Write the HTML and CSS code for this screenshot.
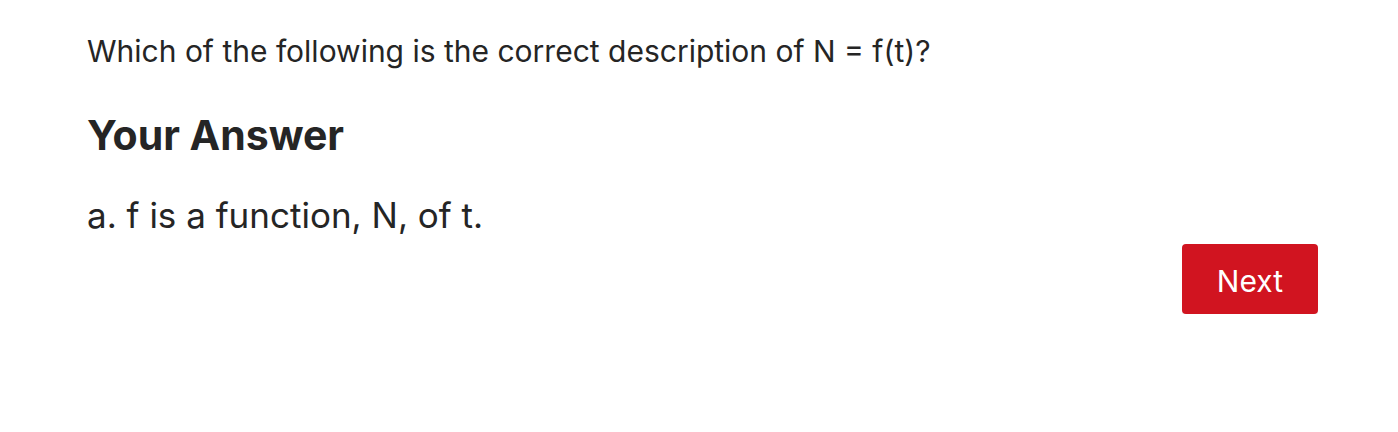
FILE: index.html
```html
<!DOCTYPE html>
<html lang="en">
<head>
<meta charset="utf-8">
<title>Question</title>
<link rel="stylesheet" href="styles.css">
</head>
<body>
<main class="quiz">
<p class="question">Which of the following is the correct description of N = f(t)?</p>
<h1 class="heading">Your Answer</h1>
<p class="answer">a. f is a function, N, of t.</p>
<div class="actions"><button class="next" type="button">Next</button></div>
</main>
</body>
</html>
```
FILE: styles.css
```css
body {
  margin: 0;
  background: #fff;
  color: #252525;
  font-family: Inter, "Liberation Sans", sans-serif;
}

.quiz {
  padding: 28px 80px 0 87px;
}

.question {
  margin: 0;
  font-size: 30px;
  line-height: 46px;
}

.heading {
  margin: 33px 0 0;
  font-size: 41px;
  line-height: 56px;
  font-weight: 700;
}

.answer {
  margin: 24px 0 0;
  font-size: 35px;
  line-height: 56px;
}

.actions {
  display: flex;
  justify-content: flex-end;
  padding-top: 1px;
}

.next {
  padding: 17px 35px 13px;
  border: 0;
  border-radius: 4px;
  background: #d11420;
  box-shadow: 0 4px 0 #f4f4f4;
  color: #fff;
  font: inherit;
  font-size: 30px;
  line-height: 40px;
}
```
